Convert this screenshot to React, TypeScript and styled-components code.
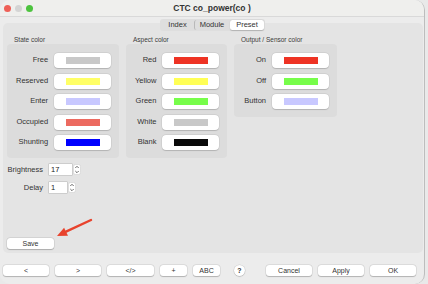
import React from "react"
import styled, { createGlobalStyle } from "styled-components"

const GlobalStyle = createGlobalStyle`
  html, body {
    margin: 0;
    padding: 0;
    background: #e9e9e9;
  }
  body {
    font-family: "Liberation Sans", "Noto Sans", Arial, sans-serif;
    color: #2f2f2f;
  }
`;

const Window = styled.div`
  width: 425px;
  height: 284px;
  box-sizing: border-box;
  background: #ececec;
  border-right: 1px solid #bdbdbd;
  border-radius: 10px;
  overflow: hidden;
  display: flex;
  flex-direction: column;
`;

const TitleBar = styled.div`
  height: 16px;
  flex-shrink: 0;
  background: #efefed;
  border-bottom: 1px solid #d9d9d9;
  display: flex;
  align-items: center;
  padding-left: 4px;
`;

const Lights = styled.div`
  display: flex;
  gap: 4px;
`;

const Light = styled.span<{ colour: string }>`
  width: 7px;
  height: 7px;
  border-radius: 50%;
  background: ${({ colour }) => colour};
`;

const Title = styled.div`
  flex: 1;
  text-align: center;
  font-size: 8.5px;
  font-weight: bold;
  color: #333;
  margin-right: 33px;
`;

const TabRow = styled.div`
  display: flex;
  justify-content: center;
  margin-top: 2px;
  margin-bottom: -8px;
  position: relative;
  z-index: 1;
`;

const Tabs = styled.div`
  display: flex;
  align-items: center;
  background: #dedede;
  border-radius: 3px;
  padding: 1px;
  height: 10px;
`;

const Tab = styled.div<{ w: number; active?: boolean; divider?: boolean }>`
  width: ${({ w }) => w}px;
  box-sizing: border-box;
  text-align: center;
  font-size: 7.5px;
  height: 10px;
  line-height: 10px;
  color: #333;
  border-radius: 2.5px;
  background: ${({ active }) => (active ? "#ffffff" : "transparent")};
  box-shadow: ${({ active }) => (active ? "0 0.5px 1px rgba(0,0,0,0.2)" : "none")};
  border-left: ${({ divider }) => (divider ? "1px solid #b9b9b9" : "1px solid transparent")};
`;

const Panel = styled.div`
  margin: 0 1px 0 3px;
  height: 230px;
  flex-shrink: 0;
  background: #e4e4e4;
  border-radius: 5px;
  box-sizing: border-box;
  padding: 12px 4px 4px 4px;
  display: flex;
  flex-direction: column;
  position: relative;
`;

const Groups = styled.div`
  display: flex;
  align-items: flex-start;
  gap: 7px;
`;

const Group = styled.div<{ w: number }>`
  width: ${({ w }) => w}px;
  display: flex;
  flex-direction: column;
`;

const GroupTitle = styled.div`
  font-size: 6.5px;
  color: #3c3c3c;
  padding-left: 7px;
  height: 9px;
  line-height: 9px;
`;

const GroupBox = styled.div`
  background: #dcdcdc;
  border-radius: 4px;
  padding: 9px 8px 8px 9px;
  display: grid;
  grid-template-columns: 1fr 57px;
  column-gap: 6px;
  row-gap: 5.6px;
  align-items: center;
`;

const RowLabel = styled.div`
  font-size: 7.5px;
  text-align: right;
  color: #333;
  margin-top: -2px;
`;

const SwatchButton = styled.div`
  height: 15px;
  background: #ffffff;
  border-radius: 4px;
  box-shadow: 0 0 0 0.5px rgba(0, 0, 0, 0.08), 0 0.5px 1px rgba(0, 0, 0, 0.15);
  display: flex;
  align-items: center;
  justify-content: center;
`;

const Swatch = styled.div<{ colour: string }>`
  width: 34px;
  height: 7px;
  background: ${({ colour }) => colour};
`;

const Settings = styled.div`
  margin-top: 6px;
  display: grid;
  grid-template-columns: 36px auto;
  column-gap: 6px;
  row-gap: 7px;
  align-items: center;
  justify-items: start;
`;

const SettingLabel = styled.div`
  font-size: 7.5px;
  color: #333;
  justify-self: end;
`;

const SpinBox = styled.div`
  display: flex;
  align-items: center;
  gap: 1px;
`;

const NumField = styled.div<{ w: number }>`
  width: ${({ w }) => w}px;
  height: 11px;
  box-sizing: border-box;
  background: #fff;
  box-shadow: 0 0 0 0.5px rgba(0, 0, 0, 0.2);
  font-size: 7.5px;
  line-height: 11px;
  padding-left: 2px;
  color: #222;
`;

const Spacer = styled.div`
  flex: 1;
`;

const PushButton = styled.div<{ w: number }>`
  width: ${({ w }) => w}px;
  height: 11px;
  background: #ffffff;
  border-radius: 3px;
  box-shadow: 0 0 0 0.5px rgba(0, 0, 0, 0.1), 0 0.5px 1px rgba(0, 0, 0, 0.2);
  font-size: 7px;
  line-height: 11px;
  text-align: center;
  color: #333;
  flex-shrink: 0;
`;

const ArrowMark = styled.svg`
  position: absolute;
  left: 50px;
  top: 190px;
`;

const BottomBar = styled.div`
  display: flex;
  align-items: center;
  gap: 6px;
  padding: 12px 0 0 3px;
`;

const HelpButton = styled.div`
  width: 11px;
  height: 11px;
  border-radius: 50%;
  background: #fff;
  box-shadow: 0 0 0 0.5px rgba(0, 0, 0, 0.1), 0 0.5px 1px rgba(0, 0, 0, 0.25);
  font-size: 7px;
  font-weight: bold;
  line-height: 11px;
  text-align: center;
  color: #333;
  margin: 0 15px 0 8px;
`;

const Stepper = () => (
  <svg width="8" height="11" viewBox="0 0 8 11">
    <rect x="0.5" y="0.5" width="7" height="10" rx="2" fill="#fff" stroke="#c8c8c8" strokeWidth="0.5" />
    <path d="M2.3 4 L4 2.3 L5.7 4" fill="none" stroke="#444" strokeWidth="0.8" />
    <path d="M2.3 7 L4 8.7 L5.7 7" fill="none" stroke="#444" strokeWidth="0.8" />
  </svg>
);

type Entry = [string, string];

const stateColours: Entry[] = [
  ["Free", "#c8c8c8"],
  ["Reserved", "#ffff66"],
  ["Enter", "#c8c8ff"],
  ["Occupied", "#ec6a60"],
  ["Shunting", "#0000ff"],
];

const aspectColours: Entry[] = [
  ["Red", "#ee3324"],
  ["Yellow", "#ffff55"],
  ["Green", "#77fd4a"],
  ["White", "#c8c8c8"],
  ["Blank", "#0a0a0a"],
];

const outputColours: Entry[] = [
  ["On", "#ee3324"],
  ["Off", "#77fd4a"],
  ["Button", "#c8c8ff"],
];

const ColourGroup = ({ title, width, entries }: { title: string; width: number; entries: Entry[] }) => (
  <Group w={width}>
    <GroupTitle>{title}</GroupTitle>
    <GroupBox>
      {entries.map(([label, colour]) => (
        <React.Fragment key={label}>
          <RowLabel>{label}</RowLabel>
          <SwatchButton>
            <Swatch colour={colour} />
          </SwatchButton>
        </React.Fragment>
      ))}
    </GroupBox>
  </Group>
);

const App = () => {
  return (
    <>
      <GlobalStyle />
      <Window>
        <TitleBar>
          <Lights>
            <Light colour="#ee5f57" />
            <Light colour="#d4d4d4" />
            <Light colour="#4dc33f" />
          </Lights>
          <Title>CTC co_power(co )</Title>
        </TitleBar>
        <TabRow>
          <Tabs>
            <Tab w={33}>Index</Tab>
            <Tab w={36} divider>Module</Tab>
            <Tab w={34} active>Preset</Tab>
          </Tabs>
        </TabRow>
        <Panel>
          <Groups>
            <ColourGroup title="State color" width={112} entries={stateColours} />
            <ColourGroup title="Aspect color" width={101} entries={aspectColours} />
            <ColourGroup title="Output / Sensor color" width={103} entries={outputColours} />
          </Groups>
          <Settings>
            <SettingLabel>Brightness</SettingLabel>
            <SpinBox>
              <NumField w={23}>17</NumField>
              <Stepper />
            </SpinBox>
            <SettingLabel>Delay</SettingLabel>
            <SpinBox>
              <NumField w={18}>1</NumField>
              <Stepper />
            </SpinBox>
          </Settings>
          <Spacer />
          <PushButton w={47}>Save</PushButton>
          <ArrowMark width="45" height="28" viewBox="0 0 45 28">
            <line x1="38" y1="7" x2="13" y2="18.7" stroke="#e8432d" strokeWidth="2.4" strokeLinecap="round" />
            <polygon points="4,23 15,22.8 11.1,14.7" fill="#e8432d" />
          </ArrowMark>
        </Panel>
        <BottomBar>
          <PushButton w={46}>&lt;</PushButton>
          <PushButton w={46}>&gt;</PushButton>
          <PushButton w={47}>&lt;/&gt;</PushButton>
          <PushButton w={27}>+</PushButton>
          <PushButton w={27}>ABC</PushButton>
          <HelpButton>?</HelpButton>
          <PushButton w={46}>Cancel</PushButton>
          <PushButton w={46}>Apply</PushButton>
          <PushButton w={46}>OK</PushButton>
        </BottomBar>
      </Window>
    </>
  );
};

export default App;
